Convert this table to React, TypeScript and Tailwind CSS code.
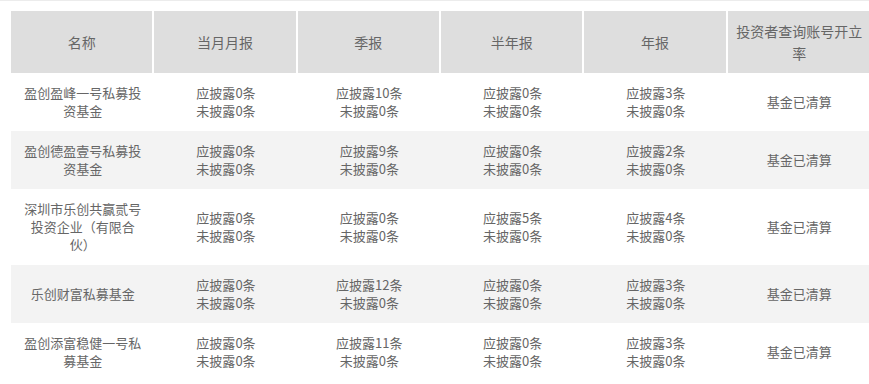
import React from 'react';

interface FundRow {
  name: string;
  monthly: [number, number];
  quarterly: [number, number];
  halfYear: [number, number];
  annual: [number, number];
  status: string;
}

const headers = ['名称', '当月月报', '季报', '半年报', '年报', '投资者查询账号开立率'];

const rows: FundRow[] = [
  { name: '盈创盈峰一号私募投资基金', monthly: [0, 0], quarterly: [10, 0], halfYear: [0, 0], annual: [3, 0], status: '基金已清算' },
  { name: '盈创德盈壹号私募投资基金', monthly: [0, 0], quarterly: [9, 0], halfYear: [0, 0], annual: [2, 0], status: '基金已清算' },
  { name: '深圳市乐创共赢贰号投资企业（有限合伙）', monthly: [0, 0], quarterly: [0, 0], halfYear: [5, 0], annual: [4, 0], status: '基金已清算' },
  { name: '乐创财富私募基金', monthly: [0, 0], quarterly: [12, 0], halfYear: [0, 0], annual: [3, 0], status: '基金已清算' },
  { name: '盈创添富稳健一号私募基金', monthly: [0, 0], quarterly: [11, 0], halfYear: [0, 0], annual: [3, 0], status: '基金已清算' },
];

// 应披露 / 未披露 两行
function Disclosure({ value }: { value: [number, number] }) {
  return (
    <>
      <div>应披露{value[0]}条</div>
      <div>未披露{value[1]}条</div>
    </>
  );
}

export default function App() {
  return (
    <div
      className="w-[869px] h-[384px] overflow-hidden bg-white border-t border-[#ececec] pt-[10px] pl-[11px]"
      style={{ fontFamily: '"Noto Sans CJK SC", "Liberation Sans", sans-serif' }}
    >
      <table className="w-[860px] table-fixed border-separate border-spacing-0 text-[#666]">
        <thead>
          <tr className="bg-[#dedede]">
            {headers.map((h, i) => (
              <th
                key={h}
                className={`h-[62px] px-[6px] text-[14px] leading-[22px] font-normal text-center align-middle ${
                  i < headers.length - 1 ? 'border-r-2 border-white' : ''
                }`}
              >
                {h}
              </th>
            ))}
          </tr>
        </thead>
        <tbody>
          {rows.map((r, i) => (
            <tr key={r.name} className={i % 2 === 1 ? 'bg-[#f3f3f3]' : 'bg-white'}>
              <td className="px-[10px] py-[11px] text-[13px] leading-[18px] text-center align-middle">{r.name}</td>
              <td className="px-[10px] py-[11px] text-[13px] leading-[18px] text-center align-middle">
                <Disclosure value={r.monthly} />
              </td>
              <td className="px-[10px] py-[11px] text-[13px] leading-[18px] text-center align-middle">
                <Disclosure value={r.quarterly} />
              </td>
              <td className="px-[10px] py-[11px] text-[13px] leading-[18px] text-center align-middle">
                <Disclosure value={r.halfYear} />
              </td>
              <td className="px-[10px] py-[11px] text-[13px] leading-[18px] text-center align-middle">
                <Disclosure value={r.annual} />
              </td>
              <td className="px-[10px] py-[11px] text-[13px] leading-[18px] text-center align-middle">{r.status}</td>
            </tr>
          ))}
        </tbody>
      </table>
    </div>
  );
}
